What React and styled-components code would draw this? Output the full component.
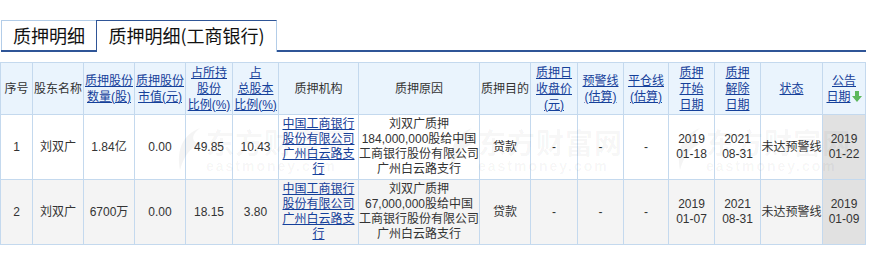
import React from "react";
import styled, { createGlobalStyle } from "styled-components";

const Global = createGlobalStyle`
  html, body { margin: 0; padding: 0; background: #fff; }
  body { font-family: "Liberation Sans", "Noto Sans CJK SC", sans-serif; color: #333; }
`;

const DARK = "#2f5597";
const LIGHT = "#b3cde8";
const GRID = "#c4d9ee";
const LINK = "#15409a";

const Page = styled.div`
  padding-top: 20px;
`;

const TabBar = styled.div`
  display: flex;
  align-items: flex-start;
  width: 865px;
  margin-left: 1px;
  height: 30px;
  border-bottom: 2px solid ${DARK};
`;

const Tab = styled.div`
  box-sizing: border-box;
  width: ${(p) => p.$w}px;
  height: ${(p) => (p.$active ? 32 : 30)}px;
  border-top: 1px solid ${(p) => (p.$active ? DARK : LIGHT)};
  border-left: 1px solid ${(p) => (p.$active ? DARK : LIGHT)};
  border-right: ${(p) => (p.$active ? `1px solid ${LIGHT}` : "none")};
  background: #fff;
  position: relative;
  z-index: ${(p) => (p.$active ? 1 : 0)};
  font-family: "Noto Sans CJK SC", sans-serif;
  font-size: 18px;
  line-height: 28px;
  text-align: center;
  color: #111;
  white-space: nowrap;
`;

const TableWrap = styled.div`
  position: relative;
  margin-top: 10px;
  width: 866px;
`;

const Table = styled.table`
  border-collapse: collapse;
  table-layout: fixed;
  width: 866px;
  font-size: 12px;
`;

const Th = styled.th`
  background: #eaf4fd;
  border: 1px solid ${GRID};
  font-weight: normal;
  color: #333;
  line-height: 16px;
  padding: 1px 0;
  height: 49px;
  text-align: center;
  vertical-align: middle;
  font-family: "Liberation Sans", "Noto Sans CJK SC", sans-serif;
`;

const Td = styled.td`
  background: ${(p) => (p.$sorted ? "#e1e1e1" : "transparent")};
  border: 1px solid ${GRID};
  color: #333;
  line-height: 15px;
  padding: 2px 0;
  height: 60px;
  text-align: center;
  vertical-align: middle;
  white-space: nowrap;
  overflow: hidden;
`;

const Tr = styled.tr`
  background: ${(p) => (p.$alt ? "#f4f4f4" : "#fff")};
`;

const HLink = styled.a`
  color: ${LINK};
  text-decoration: underline;
  cursor: pointer;
`;

const Arrow = styled.svg`
  width: 10px;
  height: 11px;
  vertical-align: -1px;
  margin-left: 1px;
`;

const Watermark = styled.div`
  position: absolute;
  left: ${(p) => p.$x}px;
  top: ${(p) => p.$y}px;
  display: flex;
  align-items: flex-start;
  gap: 4px;
  pointer-events: none;
  color: rgba(0, 0, 0, 0.045);
`;

const WmText = styled.div`
  display: flex;
  flex-direction: column;
  align-items: flex-start;
`;

const WmCn = styled.div`
  font-family: "Noto Sans CJK SC", sans-serif;
  font-weight: 700;
  font-size: 28px;
  line-height: 32px;
  letter-spacing: 1px;
`;

const WmEn = styled.div`
  font-family: "Liberation Sans", sans-serif;
  font-weight: 700;
  font-size: 14px;
  line-height: 16px;
  letter-spacing: 2px;
`;

const widths = [32, 51, 51, 51, 47, 46, 80, 121, 51, 47, 46, 45, 46, 46, 62, 43];

const DownArrow = () => (
  <Arrow viewBox="0 0 10 11">
    <path d="M3 0 H7 V5 H10 L5 11 L0 5 H3 Z" fill="#5cb85c" />
  </Arrow>
);

const br = (lines) =>
  lines.map((l, i) => (
    <React.Fragment key={i}>
      {i > 0 && <br />}
      {l}
    </React.Fragment>
  ));

const headers = [
  { t: ["序号"] },
  { t: ["股东名称"] },
  { t: ["质押股份", "数量(股)"], link: true },
  { t: ["质押股份", "市值(元)"], link: true },
  { t: ["占所持", "股份", "比例(%)"], link: true },
  { t: ["占", "总股本", "比例(%)"], link: true },
  { t: ["质押机构"] },
  { t: ["质押原因"] },
  { t: ["质押目的"] },
  { t: ["质押日", "收盘价", "(元)"], link: true },
  { t: ["预警线", "(估算)"], link: true },
  { t: ["平仓线", "(估算)"], link: true },
  { t: ["质押", "开始", "日期"], link: true },
  { t: ["质押", "解除", "日期"], link: true },
  { t: ["状态"], link: true },
  { t: ["公告", "日期"], link: true, sort: true },
];

const rows = [
  {
    no: "1",
    name: "刘双广",
    qty: "1.84亿",
    val: "0.00",
    own: "49.85",
    total: "10.43",
    amount: "184,000,000",
    start: ["2019", "01-18"],
    end: ["2021", "08-31"],
    notice: ["2019", "01-22"],
  },
  {
    no: "2",
    name: "刘双广",
    qty: "6700万",
    val: "0.00",
    own: "18.15",
    total: "3.80",
    amount: "67,000,000",
    start: ["2019", "01-07"],
    end: ["2021", "08-31"],
    notice: ["2019", "01-09"],
  },
];

const Mark = ({ x, y }) => (
  <Watermark $x={x} $y={y}>
    <svg width="26" height="46" viewBox="0 0 26 46">
      <path d="M24 2 C8 8 0 22 4 44 C8 30 14 22 24 18 C16 16 14 10 24 2 Z" fill="currentColor" />
    </svg>
    <WmText>
      <WmCn>东方财富网</WmCn>
      <WmEn>eastmoney.com</WmEn>
    </WmText>
  </Watermark>
);

export default function App() {
  return (
    <Page>
      <Global />
      <TabBar>
        <Tab $w={95}>质押明细</Tab>
        <Tab $w={181} $active>
          质押明细(工商银行)
        </Tab>
      </TabBar>
      <TableWrap>
        <Table>
          <colgroup>
            {widths.map((w, i) => (
              <col key={i} style={{ width: w }} />
            ))}
          </colgroup>
          <thead>
            <tr>
              {headers.map((h, i) => (
                <Th key={i}>
                  {h.link ? <HLink>{br(h.t)}</HLink> : br(h.t)}
                  {h.sort && <DownArrow />}
                </Th>
              ))}
            </tr>
          </thead>
          <tbody>
            {rows.map((r, i) => (
              <Tr key={i} $alt={i % 2 === 1}>
                <Td>{r.no}</Td>
                <Td>{r.name}</Td>
                <Td>{r.qty}</Td>
                <Td>{r.val}</Td>
                <Td>{r.own}</Td>
                <Td>{r.total}</Td>
                <Td>
                  <HLink>{br(["中国工商银行", "股份有限公司", "广州白云路支", "行"])}</HLink>
                </Td>
                <Td>
                  {br([
                    "刘双广质押",
                    `${r.amount}股给中国`,
                    "工商银行股份有限公司",
                    "广州白云路支行",
                  ])}
                </Td>
                <Td>贷款</Td>
                <Td>-</Td>
                <Td>-</Td>
                <Td>-</Td>
                <Td>{br(r.start)}</Td>
                <Td>{br(r.end)}</Td>
                <Td>未达预警线</Td>
                <Td $sorted>{br(r.notice)}</Td>
              </Tr>
            ))}
          </tbody>
        </Table>
        <Mark x={176} y={64} />
        <Mark x={448} y={64} />
        <Mark x={676} y={64} />
      </TableWrap>
    </Page>
  );
}
